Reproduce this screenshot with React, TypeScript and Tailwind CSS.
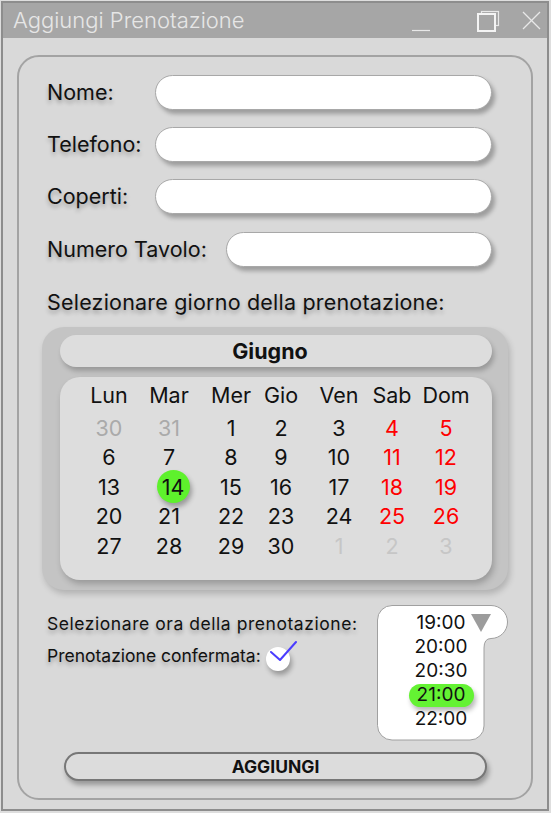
import React from "react";

const labelShadow = "[text-shadow:0_3px_4px_rgba(0,0,0,0.28)]";

type Day = { n: number; tone: "prev" | "next" | "week" | "end" };

const dayNames = ["Lun", "Mar", "Mer", "Gio", "Ven", "Sab", "Dom"];

function buildDays(): Day[] {
  const out: Day[] = [{ n: 30, tone: "prev" }, { n: 31, tone: "prev" }];
  for (let d = 1; d <= 30; d++) {
    const col = (d + 1) % 7; // 0 = Lun
    out.push({ n: d, tone: col >= 5 ? "end" : "week" });
  }
  out.push({ n: 1, tone: "next" }, { n: 2, tone: "next" }, { n: 3, tone: "next" });
  return out;
}

const toneClass: Record<Day["tone"], string> = {
  prev: "text-[#aaaaaa]",
  next: "text-[#c6c6c6]",
  week: "text-[#111]",
  end: "text-[#ff0000]",
};

function Field({ label, labelW, inputW }: { label: string; labelW: string; inputW: string }) {
  return (
    <div className="flex items-center h-[35px]">
      <span className={`${labelW} text-[21.5px] text-[#111] whitespace-nowrap ${labelShadow}`}>{label}</span>
      <div
        className={`${inputW} h-[35px] rounded-full bg-white border border-[#a8a8a8] shadow-[3px_4px_4px_rgba(0,0,0,0.28)]`}
      />
    </div>
  );
}

function TitleBar() {
  return (
    <div className="h-[35px] bg-[#a6a6a6] flex items-center pl-[10px] relative">
      <span className="text-[22px] font-light text-[#e6e6e6]">Aggiungi Prenotazione</span>
      <svg className="absolute left-[406px] top-[6px]" width="140" height="26" viewBox="0 0 140 26">
        <line x1="3" y1="21.5" x2="21" y2="21.5" stroke="#e8e8e8" strokeWidth="1.2" />
        <rect x="72.5" y="2.5" width="17" height="14" fill="none" stroke="#e8e8e8" strokeWidth="1.2" />
        <rect x="69" y="5" width="17" height="17" fill="#a6a6a6" stroke="#f4f4f4" strokeWidth="2" />
        <line x1="114" y1="3" x2="131" y2="20" stroke="#e8e8e8" strokeWidth="1.2" />
        <line x1="131" y1="3" x2="114" y2="20" stroke="#e8e8e8" strokeWidth="1.2" />
      </svg>
    </div>
  );
}

function Calendar() {
  const days = buildDays();
  return (
    <div className="ml-[23px] w-[466px] h-[263px] bg-[#c4c4c4] rounded-[22px] pt-[8px] pl-[18px] pr-[16px] shadow-[2px_4px_6px_rgba(0,0,0,0.18)]">
      <div className="h-[32px] rounded-full bg-[#dddddd] flex items-center justify-center shadow-[2px_4px_5px_rgba(0,0,0,0.22)]">
        <span className="text-[21.5px] font-bold text-[#111] pr-[12px]">Giugno</span>
      </div>
      <div className="mt-[10px] h-[203px] rounded-[20px] bg-[#dddddd] pl-[20px] shadow-[2px_4px_6px_rgba(0,0,0,0.22)]">
        <div className="grid grid-cols-[58px_62px_62px_38px_78px_28px_80px] grid-rows-[36px_repeat(5,29.5px)] text-[21.5px]">
          {dayNames.map((d) => (
            <div key={d} className="flex items-center justify-center text-[#111] whitespace-nowrap">
              {d}
            </div>
          ))}
          {days.map((d, i) => (
            <div key={i} className={`flex items-center justify-center whitespace-nowrap ${toneClass[d.tone]}`}>
              {d.n === 14 && d.tone === "week" ? (
                <span className="w-[33px] h-[33px] rounded-full bg-[#5ef12c] flex items-center justify-center translate-x-[4px] shadow-[2px_4px_5px_rgba(0,0,0,0.3)]">
                  14
                </span>
              ) : (
                d.n
              )}
            </div>
          ))}
        </div>
      </div>
    </div>
  );
}

function TimePicker() {
  const times = ["19:00", "20:00", "20:30", "21:00", "22:00"];
  return (
    <div className="relative w-[131px] h-[136px]">
      <svg className="absolute inset-0" width="131" height="136" viewBox="0 0 131 136">
        <path
          d="M15 0.5 H114 A16.5 16.5 0 0 1 114 33.5 Q107 33.5 107 43 V121 A14 14 0 0 1 93 135 H15 A14.5 14.5 0 0 1 0.5 120.5 V15 A14.5 14.5 0 0 1 15 0.5 Z"
          fill="#ffffff"
          stroke="#a0a0a0"
          strokeWidth="1"
        />
      </svg>
      <svg className="absolute left-[94px] top-[9px]" width="20" height="18" viewBox="0 0 20 18">
        <polygon points="0,0 20,0 10,18" fill="#9c9c9c" />
      </svg>
      <div className="relative pt-[6px] w-[128px] flex flex-col items-center text-[19px] text-[#111]">
        {times.map((t) => (
          <div key={t} className="h-[24px] flex items-center justify-center">
            {t === "21:00" ? (
              <span className="w-[65px] h-[23px] rounded-full bg-[#64f233] flex items-center justify-center shadow-[2px_4px_5px_rgba(0,0,0,0.28)]">
                {t}
              </span>
            ) : (
              t
            )}
          </div>
        ))}
      </div>
    </div>
  );
}

export default function App() {
  return (
    <div className="w-[551px] h-[813px] bg-[#dedede] pt-[1px] pl-[1px] font-['Inter',sans-serif]">
      <div className="w-[548px] h-[810px] border-2 border-[#8d8d8d] bg-[#d9d9d9]">
        <TitleBar />
        <div className="ml-[14px] mt-[17px] w-[516px] h-[745px] rounded-[22px] border-2 border-[#a3a3a3] pt-[18px]">
          <div className="pl-[28px] flex flex-col gap-[17px]">
            <Field label="Nome:" labelW="w-[108px]" inputW="w-[337px]" />
            <Field label="Telefono:" labelW="w-[108px]" inputW="w-[337px]" />
            <Field label="Coperti:" labelW="w-[108px]" inputW="w-[337px]" />
            <div className="mt-[1px]">
              <Field label="Numero Tavolo:" labelW="w-[179px]" inputW="w-[266px]" />
            </div>
          </div>
          <p className={`pl-[28px] mt-[23px] text-[21.5px] tracking-[0.2px] leading-[24px] text-[#111] whitespace-nowrap ${labelShadow}`}>
            Selezionare giorno della prenotazione:
          </p>
          <div className="mt-[13px]">
            <Calendar />
          </div>
          <div className="mt-[15px] flex">
            <div className="w-[358px] pl-[28px] pt-[9px] text-[17.5px] text-[#111]">
              <p className={`leading-[20px] whitespace-nowrap tracking-[0.55px] ${labelShadow}`}>
                Selezionare ora della prenotazione:
              </p>
              <div className="mt-[10px] flex items-center">
                <span className={`leading-[20px] whitespace-nowrap ${labelShadow}`}>Prenotazione confermata:</span>
                <span className="relative ml-[5px] translate-y-[3px] w-[24px] h-[24px] rounded-full bg-white shadow-[2px_4px_5px_rgba(0,0,0,0.3)]">
                  <svg className="absolute left-[3px] top-[-7px]" width="28" height="26" viewBox="0 0 28 26">
                    <polyline
                      points="2,12 11,20 27,2"
                      fill="none"
                      stroke="#4a3cff"
                      strokeWidth="2"
                      strokeLinecap="round"
                      strokeLinejoin="round"
                    />
                  </svg>
                </span>
              </div>
            </div>
            <TimePicker />
          </div>
          <button className="mt-[11px] ml-[45px] w-[423px] h-[29px] rounded-full border-2 border-[#777] bg-[#dcdcdc] text-[17.5px] font-bold text-[#111] shadow-[2px_4px_5px_rgba(0,0,0,0.3)]">
            AGGIUNGI
          </button>
        </div>
      </div>
    </div>
  );
}
